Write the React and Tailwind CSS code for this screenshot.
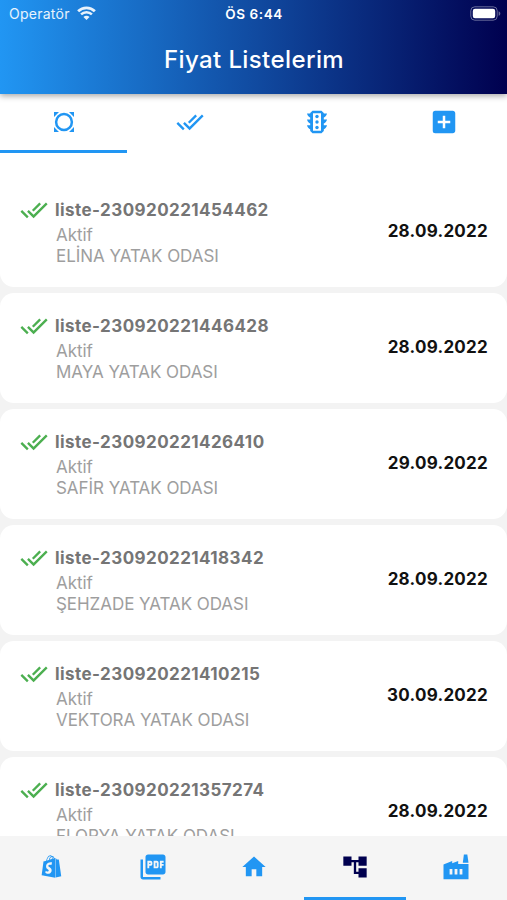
import { MdAccountTree, MdAddBox, MdDoneAll, MdHome, MdPictureAsPdf } from "react-icons/md";
import { FaShopify } from "react-icons/fa";

const lists = [
  { code: "liste-230920221454462", name: "ELİNA YATAK ODASI", date: "28.09.2022" },
  { code: "liste-230920221446428", name: "MAYA YATAK ODASI", date: "28.09.2022" },
  { code: "liste-230920221426410", name: "SAFİR YATAK ODASI", date: "29.09.2022" },
  { code: "liste-230920221418342", name: "ŞEHZADE YATAK ODASI", date: "28.09.2022" },
  { code: "liste-230920221410215", name: "VEKTORA YATAK ODASI", date: "30.09.2022" },
  { code: "liste-230920221357274", name: "FLORYA YATAK ODASI", date: "28.09.2022" },
];

function CircleCornersIcon({ className }) {
  return (
    <svg viewBox="0 0 24 24" fill="currentColor" className={className}>
      <circle cx="12" cy="12" r="7.9" fill="none" stroke="currentColor" strokeWidth="2.5" />
      <path d="M2 2h5L2 7zM22 2v5L17 2zM2 22v-5L7 22zM22 22h-5l5-5z" />
    </svg>
  );
}

function TrafficIcon({ className }) {
  return (
    <svg viewBox="0 0 24 24" fill="currentColor" className={className}>
      <path d="M2 3.6h4v4.2c-2-.4-3.600-2-4-4.200zM22 3.600h-4v4.200c2-.4 3.600-2 4-4.200zM2 9.400h4v4.200c-2-.4-3.600-2-4-4.200zM22 9.400h-4v4.200c2-.4 3.600-2 4-4.200zM2 15.200h4v4.200c-2-.4-3.600-2-4-4.200zM22 15.200h-4v4.200c2-.4 3.600-2 4-4.200z" />
      <path fillRule="evenodd" d="M7.5.7h9L18.800 3v18l-2.300 2.300h-9L5.200 21V3zM8 3.200v17.600h8V3.200z" />
      <circle cx="12" cy="6.5" r="1.7" />
      <circle cx="12" cy="12" r="1.7" />
      <circle cx="12" cy="17.5" r="1.7" />
    </svg>
  );
}

function FactoryIcon({ className }) {
  return (
    <svg viewBox="0 0 26 26" fill="currentColor" className={className}>
      <path d="M20.9.6h3.4l1.2 8.2h-5.7z" />
      <path
        fillRule="evenodd"
        d="M.5 10.600 9.200 7v2.300L15.200 7v3h10.300v15.200H.5zM6.600 15v5.400h2.800V15zm5 0v5.400h2.800V15zm5 0v5.400h2.800V15z"
      />
    </svg>
  );
}

function WifiIcon() {
  return (
    <svg viewBox="0 0 20 15" className="h-[15px] w-[19px]" fill="none" stroke="currentColor">
      <path d="M1.2 5.2a12.4 12.4 0 0 1 17.6 0" strokeWidth="2.9" />
      <path d="M4.3 8.5a8 8 0 0 1 11.4 0" strokeWidth="2.6" />
      <path d="M10 14.4 6.8 11.2a4.5 4.5 0 0 1 6.4 0z" fill="currentColor" stroke="none" />
    </svg>
  );
}

function BatteryIcon() {
  return (
    <svg viewBox="0 0 31 15" className="h-[15px] w-[31px]">
      <rect x=".8" y=".8" width="26.4" height="13.4" rx="4" fill="none" stroke="#fff" strokeOpacity=".4" />
      <rect x="2.8" y="2.8" width="22.4" height="9.4" rx="2.2" fill="#fff" />
      <path d="M28.6 5.2c2.3.8 2.3 3.8 0 4.6z" fill="#fff" fillOpacity=".4" />
    </svg>
  );
}

function Header() {
  return (
    <header className="relative z-10 h-[94px] shrink-0 bg-linear-to-r/srgb from-[#2196f3] to-[#00004f] text-white shadow-[0_2px_6px_rgba(0,0,0,0.35)]">
      <div className="grid h-[27px] grid-cols-3 items-center pl-[9px] pr-[6px]">
        <div className="flex items-center gap-[7px] text-[14px] tracking-[0.25px] text-white/90">
          <span>Operatör</span>
          <WifiIcon />
        </div>
        <span className="pr-0.5 pt-px text-center text-[13.5px] font-semibold tracking-[0.6px]">ÖS 6:44</span>
        <div className="flex justify-end">
          <BatteryIcon />
        </div>
      </div>
      <h1 className="flex h-[66px] items-center justify-center pl-px text-[24px] font-medium tracking-[0.4px]">
        Fiyat Listelerim
      </h1>
    </header>
  );
}

function Tabs() {
  return (
    <nav className="grid h-[59px] shrink-0 grid-cols-4 bg-white text-[#2196f3]">
      <button className="flex items-center justify-center border-b-[3px] border-[#2196f3] pl-0.5">
        <CircleCornersIcon className="size-6" />
      </button>
      <button className="flex items-center justify-center border-b-[3px] border-transparent">
        <MdDoneAll className="size-7" />
      </button>
      <button className="flex items-center justify-center border-b-[3px] border-transparent">
        <TrafficIcon className="size-6" />
      </button>
      <button className="flex items-center justify-center border-b-[3px] border-transparent">
        <MdAddBox className="size-[30px]" />
      </button>
    </nav>
  );
}

function ListCard({ item }) {
  return (
    <article className="flex h-[110px] shrink-0 items-center justify-between rounded-[14px] bg-white pl-5 pr-[19px]">
      <div className="flex h-full gap-[7px] pt-[19px]">
        <MdDoneAll className="size-7 text-[#4caf50]" />
        <div>
          <h2 className="text-[17px] font-bold leading-7 tracking-[0.43px] text-[#757575]">{item.code}</h2>
          <div className="pl-px pt-px text-[17px] leading-[21px] tracking-[-0.05px] text-[#9e9e9e]">
            <p>Aktif</p>
            <p>{item.name}</p>
          </div>
        </div>
      </div>
      <time className="text-[17px] font-bold tracking-[0.25px] text-[#111]">{item.date}</time>
    </article>
  );
}

function BottomBar() {
  return (
    <nav className="grid h-16 shrink-0 grid-cols-5 bg-[#f5f5f5] text-[#2196f3]">
      <button className="flex items-center justify-center border-b-[3px] border-transparent pl-0.5">
        <FaShopify className="size-[23px]" />
      </button>
      <button className="flex items-center justify-center border-b-[3px] border-transparent pl-0.5">
        <MdPictureAsPdf className="size-[30px]" />
      </button>
      <button className="flex items-center justify-center border-b-[3px] border-transparent pl-0.5">
        <MdHome className="size-7" />
      </button>
      <button className="flex items-center justify-center border-b-[3px] border-[#2196f3] text-[#00004f]">
        <MdAccountTree className="size-7" />
      </button>
      <button className="flex items-center justify-center border-b-[3px] border-transparent">
        <FactoryIcon className="size-[26px]" />
      </button>
    </nav>
  );
}

export default function App() {
  return (
    <div className="flex h-[900px] w-full flex-col overflow-hidden bg-white font-['Inter',sans-serif]">
      <Header />
      <Tabs />
      <main className="flex min-h-0 flex-1 flex-col overflow-hidden bg-[#f3f3f3]">
        {/* covers the rounded top corners of the first card */}
        <div className="-mb-5 h-11 shrink-0 bg-white" />
        <div className="flex flex-col gap-1.5">
          {lists.map((item) => (
            <ListCard key={item.code} item={item} />
          ))}
        </div>
      </main>
      <BottomBar />
    </div>
  );
}
